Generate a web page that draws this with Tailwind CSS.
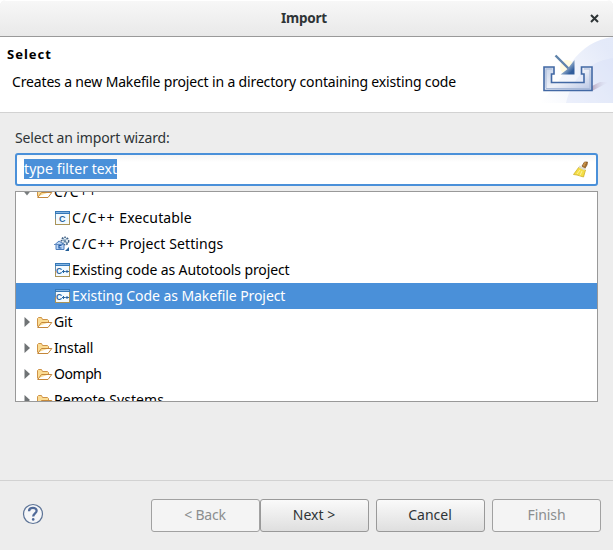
<!DOCTYPE html>
<html lang="en">
<head>
<meta charset="utf-8">
<title>Import</title>
<script src="https://cdn.jsdelivr.net/npm/@tailwindcss/browser@4"></script>
</head>
<body class="w-[613px] h-[550px] overflow-hidden bg-white">
<svg class="hidden">
  <defs>
    <linearGradient id="fold" x1="0" y1="0" x2="0" y2="1"><stop offset="0" stop-color="#fff3cf"/><stop offset="1" stop-color="#f5c566"/></linearGradient>
    <symbol id="folder" viewBox="0 0 16 16">
      <path d="M.5 12.500V4.500L1.500 3.500H4.500L5.500 5.500H10.500L11.500 6.500V8.500" fill="#fbdc94" stroke="#cf9347"/>
      <path d="M.7 13.500L4.500 8.500H14.800L11 13.500Z" fill="url(#fold)" stroke="#c4873a"/>
    </symbol>
    <symbol id="win" viewBox="0 0 16 16">
      <rect x=".5" y="2.500" width="14" height="12" fill="#f3faff" stroke="#aa9458"/>
      <rect x="0" y="1" width="15" height="3" fill="#3578b8"/><rect x="1" y="2" width="13" height="1" fill="#83b5e3"/>
      <path d="M.5 4V9" stroke="#5b8cae"/>
    </symbol>
  </defs>
</svg>
<div class="w-[613px] h-[550px] flex flex-col rounded-t-[6px] overflow-hidden bg-[#ededed] text-[14px] leading-5 whitespace-nowrap" style="font-family:'Noto Sans','Open Sans',sans-serif">
  <header class="h-[37px] shrink-0 grid grid-cols-[1fr_auto_1fr] items-center bg-linear-to-b from-[#f7f7f7] to-[#e9e9e9] border-b border-[#999] border-t border-t-white text-[#2e3436]">
    <span></span>
    <span class="font-bold text-[13.500px] tracking-[-0.200px] mr-[5px] -mt-px">Import</span>
    <svg class="justify-self-end mr-[14px] -mt-px" width="9" height="9" viewBox="0 0 9 9"><path d="M1 1L8 8M8 1L1 8" stroke="#2e3436" stroke-width="2"/></svg>
  </header>
  <section class="h-[76px] shrink-0 bg-white border-b border-[#d2d2d2] flex justify-between text-black">
    <div class="pt-[7px]">
      <div class="pl-[7px] font-bold text-[13px] tracking-[1px]">Select</div>
      <div class="pl-3 pt-[8px] tracking-[-0.155px]">Creates a new Makefile project in a directory containing existing code</div>
    </div>
    <svg width="75" height="66" viewBox="0 0 75 66">
      <defs>
        <linearGradient id="haze" x1="0" y1="1" x2="1" y2=".3"><stop offset="0" stop-color="#fff"/><stop offset="1" stop-color="#dfe6f8"/></linearGradient>
        <linearGradient id="tray" x1="0" y1="0" x2="1" y2="1"><stop offset="0" stop-color="#c5d2e8"/><stop offset=".5" stop-color="#eef1f9"/><stop offset="1" stop-color="#b5c3e3"/></linearGradient>
        <linearGradient id="arrow" x1="0" y1="0" x2="1" y2="1"><stop offset=".35" stop-color="#b9cbdc"/><stop offset=".8" stop-color="#2f5c9c"/></linearGradient>
        <linearGradient id="shade" x1="0" y1="0" x2="1" y2="0"><stop offset="0" stop-color="#b9a9c0"/><stop offset="1" stop-color="#dbe3f6" stop-opacity="0"/></linearGradient>
      </defs>
      <path d="M2 66C18 50 20 44 33 26C45 10 58 2 75 0V66Z" fill="url(#haze)" opacity=".85"/>
      <path d="M28 66C34 42 49 25 75 21V66Z" fill="#d3def6" opacity=".35"/>
      <path d="M54 54L71 45L62 45L54 49Z" fill="url(#shade)"/>
      <circle cx="29" cy="30" r="7" fill="#fffbe0"/>
      <path d="M6 30H16V37H13.500V45.500H46V37H43.500V30H54V53.500H6Z" fill="url(#tray)" stroke="#4268a4" stroke-width="1.600"/>
      <path d="M8 32H14M8 32.500V51.500H52V32.500M46 32H52" fill="none" stroke="#a8b9d8"/>
      <path d="M17.500 18.500L31 32" stroke="#5f83aa" stroke-width="2.400"/>
      <path d="M36.500 23V37.500H22.500L29 32.500Z" fill="url(#arrow)"/>
    </svg>
  </section>
  <main class="h-[368px] shrink-0 pt-[15px] px-[15px] border-b border-[#d2d2d2]">
    <div class="text-[#2e3436] tracking-[-0.130px]">Select an import wizard:</div>
    <div class="mt-[5px] h-[33px] w-[583px] border-2 border-[#4a90d9] rounded-[3px] bg-linear-to-b from-[#f5f5f5] to-white to-25% flex items-center justify-between pl-[7px] pr-[6px]">
      <span class="bg-[#4a90d9] text-white h-5 leading-5 -mt-px tracking-[0.080px]">type filter text</span>
      <svg class="-mt-px" width="18" height="18" viewBox="0 0 18 18">
        <path d="M10 6L12.500 2H15.500L15 5L12.500 9Z" fill="#a87332" stroke="#7b4e1d" stroke-width=".7"/>
        <path d="M12 3H14M11 5H13" stroke="#e3ad5e"/>
        <path d="M7 7L1.500 14.500L5 15L11.500 17L13.500 10Z" fill="#f4de45" stroke="#d0b02a" stroke-width=".8"/>
        <path d="M8 10L5 14M10 11L8 15.500" stroke="#fff19a"/>
        <path d="M7 6.500L13 9.500" stroke="#dedbd0" stroke-width="2"/>
      </svg>
    </div>
    <div class="mt-[5px] h-[211px] w-[583px] border border-[#999] bg-white overflow-hidden text-black">
      <div class="-mt-[13px]">
        <div class="h-[26px] pl-[5px] flex items-center"><svg width="16" height="16" viewBox="0 0 16 16"><path d="M2 6.500H10L6 11.500Z" fill="#777b7d"/></svg><svg width="16" height="16"><use href="#folder"/></svg><span class="ml-[1px] tracking-[0.900px]">C/C++</span></div>
        <div class="h-[26px] pl-[39px] flex items-center"><svg width="16" height="16"><use href="#win"/><text x="4" y="12" font-size="9" font-weight="bold" fill="#2864a0" font-family="Liberation Sans">C</text></svg><span class="ml-[1px]"><span class="tracking-[0.900px]">C/C++</span><span class="tracking-[0.150px]"> Executable</span></span></div>
        <div class="h-[26px] pl-[38px] flex items-center"><svg width="16" height="16" viewBox="0 0 16 16"><circle cx="11" cy="5" r="3.700" fill="#e2edf5" stroke="#405f83" stroke-width="1.400" stroke-dasharray="1.700 1"/><path d="M8 4L14 7M9 8L13 2M9 2L13 8" stroke="#55799a" stroke-width=".8"/><path d="M1 8.500L5 5L10 8.500V13.500H2V9" fill="#b9d4f4" stroke="#4c7dbd"/><path d="M0 8.500H9" stroke="#638bc0"/><path d="M7.500 9.500H5V12H7.500" fill="none" stroke="#1d57a3" stroke-width="1.200"/><path d="M15 11V15H11Z" fill="#245f98"/></svg><span class="ml-[2px]"><span class="tracking-[0.900px]">C/C++</span><span class="tracking-[0.090px]"> Project Settings</span></span></div>
        <div class="h-[26px] pl-[39px] flex items-center"><svg width="16" height="16"><use href="#win"/><text x="1" y="12" font-size="8.500" font-weight="bold" fill="#2864a0" font-family="Liberation Sans">C</text><path d="M7 9.500H10.500M8.500 8V11M10.500 9.500H14M12 8V11" stroke="#2864a0"/></svg><span class="ml-[1px] tracking-[-0.120px]">Existing code as Autotools project</span></div>
        <div class="h-[26px] pl-[39px] flex items-center bg-[#4a90d9] text-white"><svg width="16" height="16"><use href="#win"/><text x="1" y="12" font-size="8.500" font-weight="bold" fill="#2864a0" font-family="Liberation Sans">C</text><path d="M7 9.500H10.500M8.500 8V11M10.500 9.500H14M12 8V11" stroke="#2864a0"/></svg><span class="ml-[1px] tracking-[-0.080px]">Existing Code as Makefile Project</span></div>
        <div class="h-[26px] pl-[5px] flex items-center"><svg width="16" height="16" viewBox="0 0 16 16"><path d="M3.500 3L9 8L3.500 13Z" fill="#6f7375"/></svg><svg width="16" height="16"><use href="#folder"/></svg><span class="ml-[1px] tracking-[-0.200px]">Git</span></div>
        <div class="h-[26px] pl-[5px] flex items-center"><svg width="16" height="16" viewBox="0 0 16 16"><path d="M3.500 3L9 8L3.500 13Z" fill="#6f7375"/></svg><svg width="16" height="16"><use href="#folder"/></svg><span class="ml-[1px] tracking-[-0.150px]">Install</span></div>
        <div class="h-[26px] pl-[5px] flex items-center"><svg width="16" height="16" viewBox="0 0 16 16"><path d="M3.500 3L9 8L3.500 13Z" fill="#6f7375"/></svg><svg width="16" height="16"><use href="#folder"/></svg><span class="ml-[1px] tracking-[-0.450px]">Oomph</span></div>
        <div class="h-[26px] pl-[5px] flex items-center"><svg width="16" height="16" viewBox="0 0 16 16"><path d="M3.500 3L9 8L3.500 13Z" fill="#6f7375"/></svg><svg width="16" height="16"><use href="#folder"/></svg><span class="ml-[1px] tracking-[0.070px]">Remote Systems</span></div>
      </div>
    </div>
  </main>
  <footer class="flex-1 flex items-start pt-[18px] pl-[22px]">
    <svg class="mt-[4px]" width="22" height="22" viewBox="0 0 22 22"><circle cx="11" cy="11" r="9.500" fill="#f5f6f8" stroke="#5c7396" stroke-width="1.200"/><path d="M7 8.200C7.200 3.800 14.800 3.900 14.600 8C14.500 10.400 11.200 10.500 11.200 13.500" fill="none" stroke="#506a99" stroke-width="2.300"/><circle cx="11.200" cy="16.400" r="1.300" fill="#506a99"/></svg>
    <button class="ml-[107px] w-[109px] h-[33px] pr-px pb-px rounded-[3px] border border-[#a1a1a1] bg-[#f4f4f4] text-[#8b8e8f] tracking-[-0.200px]">&lt; Back</button>
    <button class="w-[109px] h-[33px] pr-px pb-px rounded-[3px] border border-[#999] bg-linear-to-b from-[#fafafa] to-[#dfdfdf] text-[#2e3436]">Next &gt;</button>
    <button class="ml-[7px] w-[109px] h-[33px] pr-px pb-px rounded-[3px] border border-[#999] bg-linear-to-b from-[#fafafa] to-[#dfdfdf] text-[#2e3436]">Cancel</button>
    <button class="ml-[7px] w-[109px] h-[33px] pb-px rounded-[3px] border border-[#a1a1a1] bg-[#f4f4f4] text-[#8b8e8f] tracking-[-0.100px]">Finish</button>
  </footer>
</div>
</body>
</html>
